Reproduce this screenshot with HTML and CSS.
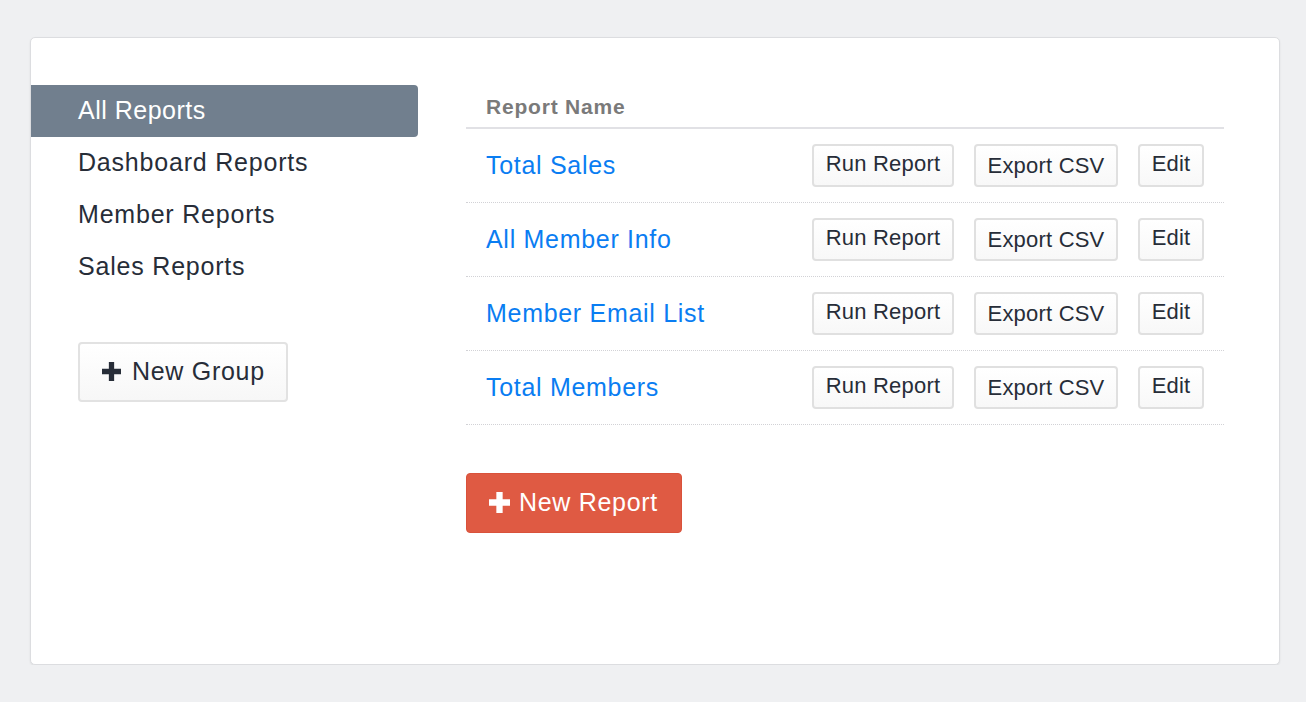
FILE: index.html
```html
<!DOCTYPE html>
<html>
<head>
<meta charset="utf-8">
<link rel="stylesheet" href="styles.css">
</head>
<body>
<div class="card">
  <aside class="sidebar">
    <nav class="groups">
      <a class="group active">All Reports</a>
      <a class="group">Dashboard Reports</a>
      <a class="group">Member Reports</a>
      <a class="group">Sales Reports</a>
    </nav>
    <button class="btn btn-big btn-light">
      <svg class="plus" width="19" height="19" viewBox="0 0 18 18"><path d="M6.5 0h5v6.5H18v5h-6.5V18h-5v-6.5H0v-5h6.5z" fill="currentColor"/></svg>
      <span>New Group</span>
    </button>
  </aside>
  <main class="main">
    <div class="table">
      <div class="thead">Report Name</div>
      <div class="row">
        <a class="name">Total Sales</a>
        <div class="actions">
          <button class="btn btn-sm btn-run">Run Report</button>
          <button class="btn btn-sm btn-export">Export CSV</button>
          <button class="btn btn-sm btn-edit">Edit</button>
        </div>
      </div>
      <div class="row">
        <a class="name">All Member Info</a>
        <div class="actions">
          <button class="btn btn-sm btn-run">Run Report</button>
          <button class="btn btn-sm btn-export">Export CSV</button>
          <button class="btn btn-sm btn-edit">Edit</button>
        </div>
      </div>
      <div class="row">
        <a class="name">Member Email List</a>
        <div class="actions">
          <button class="btn btn-sm btn-run">Run Report</button>
          <button class="btn btn-sm btn-export">Export CSV</button>
          <button class="btn btn-sm btn-edit">Edit</button>
        </div>
      </div>
      <div class="row">
        <a class="name">Total Members</a>
        <div class="actions">
          <button class="btn btn-sm btn-run">Run Report</button>
          <button class="btn btn-sm btn-export">Export CSV</button>
          <button class="btn btn-sm btn-edit">Edit</button>
        </div>
      </div>
    </div>
    <button class="btn btn-big btn-red">
      <svg class="plus" width="21" height="21" viewBox="0 0 20 20"><path d="M7 0h6v7h7v6h-7v7H7v-7H0V7h7z" fill="currentColor"/></svg>
      <span>New Report</span>
    </button>
  </main>
</div>
</body>
</html>
```
FILE: styles.css
```css
* { box-sizing: border-box; }
html, body { margin: 0; padding: 0; }
body {
  background: #eff0f2;
  font-family: "Liberation Sans", Arial, sans-serif;
  color: #272d38;
  padding: 37px 26px 0 30px;
}
.card {
  background: #fff;
  border: 1px solid #dcdde0;
  border-radius: 5px;
  box-shadow: 0 1px 2px rgba(0,0,0,0.08);
  height: 628px;
  display: flex;
  padding-top: 47px;
}
.sidebar {
  width: 387px;
  flex: none;
}
.groups { display: flex; flex-direction: column; }
.group {
  display: block;
  height: 52px;
  line-height: 50px;
  padding-left: 47px;
  font-size: 25px;
  color: #272d38;
  letter-spacing: 0.8px;
}
.group.active {
  background: #717f8e;
  color: #fff;
  border-radius: 0 4px 4px 0;
  letter-spacing: 0.5px;
}
.btn {
  font-family: "Liberation Sans", Arial, sans-serif;
  border-radius: 4px;
  display: inline-flex;
  align-items: center;
  cursor: pointer;
}
.btn-big {
  height: 60px;
  font-size: 25px;
  letter-spacing: 0.7px;
  padding: 0 0 2px 22px;
}
.btn-big .plus { margin-right: 11px; flex: none; }
.btn-light {
  margin: 49px 0 0 47px;
  width: 210px;
  background: linear-gradient(#fff, #f7f7f7);
  border: 2px solid #e2e2e2;
  color: #272d38;
}
.btn-light .plus { color: #272d38; }
.main {
  margin-left: 48px;
  width: 758px;
  flex: none;
}
.thead {
  height: 44px;
  border-bottom: 2px solid #e1e1e5;
  padding-left: 20px;
  font-size: 21px;
  font-weight: bold;
  color: #7a7a7a;
  line-height: 44px;
  letter-spacing: 0.8px;
}
.row {
  height: 74px;
  border-bottom: 1px dotted #d2d2d6;
  display: flex;
  align-items: center;
  padding: 0 20px;
}
.name {
  flex: 1;
  font-size: 25px;
  color: #0a7df2;
  letter-spacing: 0.7px;
}
.actions { display: flex; gap: 20px; }
.btn-sm {
  height: 43px;
  font-size: 22px;
  background: linear-gradient(#fff, #f8f8f8);
  border: 2px solid #e0e0e0;
  color: #272d38;
  padding: 0;
  justify-content: center;
  letter-spacing: 0.2px;
}
.btn-run { width: 142px; padding-bottom: 4px; }
.btn-export { width: 144px; }
.btn-edit { width: 66px; padding-bottom: 4px; }
.btn-red {
  margin-top: 48px;
  width: 216px;
  background: #df5a43;
  border: 1px solid #d9523b;
  color: #fff;
  padding-left: 22px;
}
.btn-red .plus { color: #fff; margin-right: 9px; }
```
